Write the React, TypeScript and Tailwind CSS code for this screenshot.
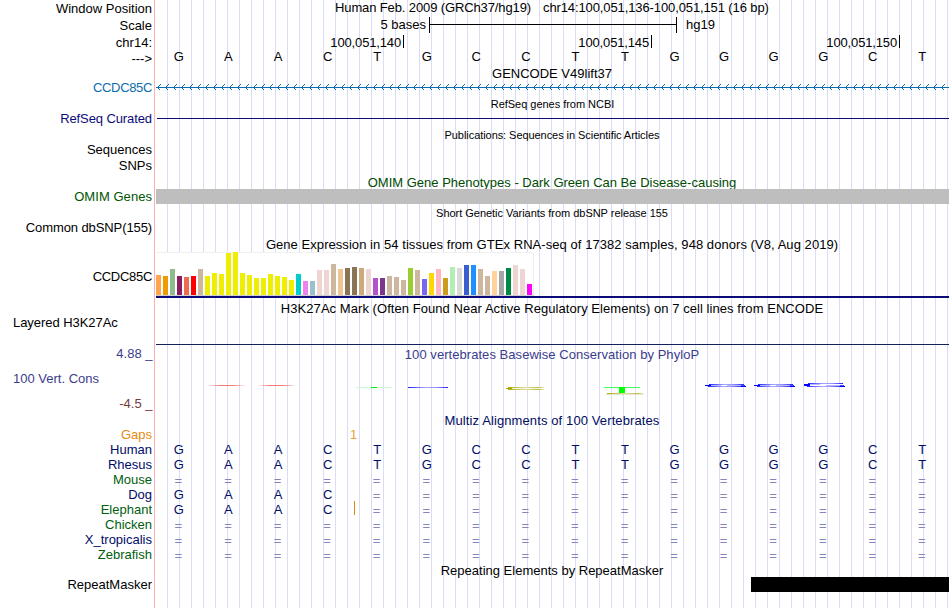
import type { ReactNode } from 'react';

const BASES = 'GAACTGCCTTGGGGCT'.split('');
const ALIGNED = [...BASES];
const GAPPED = Array(16).fill('=') as string[];
const PARTIAL = ['G', 'A', 'A', 'C', ...(Array(12).fill('=') as string[])];

// [height, colour] for each of the 54 GTEx tissues
const TISSUES: [number, string][] = [
  [20, '#ffa54f'], [19, '#ee9a00'], [26, '#8fbc8f'], [19, '#8b1c62'], [18, '#ee6a50'], [19, '#ff0000'],
  [26, '#cdb79e'], [19, '#eeee00'], [22, '#eeee00'], [21, '#eeee00'], [42, '#eeee00'], [43, '#eeee00'],
  [22, '#eeee00'], [20, '#eeee00'], [17, '#eeee00'], [17, '#eeee00'], [21, '#eeee00'], [19, '#eeee00'],
  [18, '#eeee00'], [15, '#eeee00'], [21, '#00cdcd'], [14, '#ee82ee'], [14, '#9ac0cd'], [25, '#eed5d2'],
  [25, '#eed5d2'], [31, '#cdb79e'], [26, '#eec591'], [27, '#8b7355'], [28, '#8b7355'], [27, '#cdaa7d'],
  [26, '#eed5d2'], [17, '#b452cd'], [17, '#7a378b'], [19, '#cdb79e'], [18, '#cdb79e'], [15, '#cdb79e'],
  [27, '#9acd32'], [25, '#cdb79e'], [16, '#7a67ee'], [22, '#ffd700'], [26, '#ffb6c1'], [17, '#cd9b1d'],
  [28, '#b4eeb4'], [27, '#d9d9d9'], [30, '#3a5fcd'], [30, '#1e90ff'], [26, '#cdb79e'], [19, '#cdb79e'],
  [24, '#ffd39b'], [24, '#a6a6a6'], [27, '#008b45'], [30, '#eed5d2'], [26, '#eed5d2'], [11, '#ff00ff'],
];

const SPECIES: { name: string; green?: boolean; cells: string[]; insert?: boolean }[] = [
  { name: 'Human', cells: ALIGNED },
  { name: 'Rhesus', cells: ALIGNED },
  { name: 'Mouse', green: true, cells: GAPPED },
  { name: 'Dog', cells: PARTIAL },
  { name: 'Elephant', green: true, cells: PARTIAL, insert: true },
  { name: 'Chicken', green: true, cells: GAPPED },
  { name: 'X_tropicalis', cells: GAPPED },
  { name: 'Zebrafish', green: true, cells: GAPPED },
];

function Row({ h, label, side = '', align = 'text-right', children }: { h: string; label?: ReactNode; side?: string; align?: string; children?: ReactNode }) {
  return (
    <div className={`flex shrink-0 ${h}`}>
      <div className={`w-[155px] shrink-0 pr-[3px] ${align} ${side}`}>{label}</div>
      <div className="w-[794px] shrink-0">{children}</div>
    </div>
  );
}

function Title({ h, className = '', children }: { h: string; className?: string; children: ReactNode }) {
  return (
    <Row h={h}>
      <div className={`text-center ${className}`}>{children}</div>
    </Row>
  );
}

function Letters({ cells, className = '' }: { cells: string[]; className?: string }) {
  return (
    <div className={`-ml-[0.9px] grid w-[793px] grid-cols-16 text-center ${className}`}>
      {cells.map((c, i) =>
        c === '=' ? <span key={i} className="-ml-px pt-px text-[#8686bb]">=</span> : <span key={i}>{c}</span>,
      )}
    </div>
  );
}

function StrandLine() {
  const chevrons = Array.from({ length: 99 }, (_, i) => `M${5.5 + i * 8} 0.5l-3 3l3 3`).join('');
  return (
    <svg className="mt-[4px] block h-[7px] w-[794px]" viewBox="0 0 794 7" fill="none" stroke="#0c6cb0" shapeRendering="crispEdges">
      <path d="M1 3.5H794" />
      <path d={chevrons} />
    </svg>
  );
}

function FlatG({ x, y, tall }: { x: number; y: number; tall?: boolean }) {
  const b = tall ? 3 : 2;
  return (
    <g transform={`translate(${x} ${y})`}>
      <rect x="4" y="0" width="35" height={b + 1} fill="#fff" />
      <rect x="4" y="0" width="35" height="1" fill="url(#rim)" />
      <rect x="0" y="1" width="6" height={b - 1} fill="#0000ff" />
      <rect x="6" y="1" width="10" height="1" fill="#b9b9ff" />
      <rect x="22" y={b - 1} width="14" height="1" fill="#b9b9ff" />
      <rect x="36" y={b - 1} width="4" height="1" fill="#4545ff" />
      <rect x="3" y={b} width="34" height="1" fill="url(#rim)" />
      <rect x="36" y={b} width="5" height="1" fill="#0000ff" />
    </g>
  );
}

function ConservationLogo() {
  return (
    <svg className="block h-[50px] w-[794px]" viewBox="155 362 794 50" shapeRendering="crispEdges">
      <defs>
        <linearGradient id="red">
          <stop offset="0" stopColor="#ff6060" stopOpacity="0" />
          <stop offset="0.35" stopColor="#f67c7c" />
          <stop offset="0.65" stopColor="#f67c7c" />
          <stop offset="1" stopColor="#ff6060" stopOpacity="0" />
        </linearGradient>
        <linearGradient id="rim">
          <stop offset="0" stopColor="#2020ff" />
          <stop offset="0.45" stopColor="#a8a8ff" />
          <stop offset="0.7" stopColor="#9090ff" />
          <stop offset="1" stopColor="#2020ff" />
        </linearGradient>
        <linearGradient id="olive">
          <stop offset="0" stopColor="#aaaa00" />
          <stop offset="0.5" stopColor="#e0e0a8" />
          <stop offset="0.85" stopColor="#bcbc48" />
          <stop offset="1" stopColor="#e6e6b8" />
        </linearGradient>
      </defs>
      <rect x="207" y="385" width="39" height="1" fill="url(#red)" />
      <rect x="257" y="385" width="39" height="1" fill="url(#red)" />
      <rect x="356" y="387" width="36" height="1" fill="#ccf8d4" />
      <rect x="371" y="387" width="6" height="1" fill="#00f000" />
      <rect x="408" y="387" width="40" height="1" fill="url(#rim)" />
      <rect x="508" y="387" width="36" height="1" fill="url(#olive)" />
      <rect x="506" y="388" width="6" height="1" fill="#a8a800" />
      <rect x="512" y="388" width="29" height="1" fill="#f5f5dc" />
      <rect x="508" y="389" width="36" height="1" fill="url(#olive)" />
      <rect x="604" y="387" width="36" height="1" fill="#48ff60" />
      <rect x="619" y="387" width="6" height="6" fill="#00ff00" />
      <rect x="607" y="393" width="36" height="1" fill="url(#olive)" />
      <rect x="606" y="394" width="38" height="1" fill="#d8d8a0" opacity="0.6" />
      <FlatG x={705} y={384} />
      <FlatG x={754} y={384} />
      <FlatG x={804} y={383} tall />
    </svg>
  );
}

export default function App() {
  return (
    <div className="h-[608px] w-[950px] overflow-hidden bg-white font-['Liberation_Sans',Arial,sans-serif] text-[13px] leading-[15px] whitespace-pre text-black">
      <div className="flex h-full w-[949px] flex-col bg-[linear-gradient(#ffb0b0,#ffb0b0),repeating-linear-gradient(to_right,#dcdcf7_0,#dcdcf7_1px,transparent_1px,transparent_12px)] bg-[size:1px_100%,782px_100%] bg-[position:154px_0,167px_0] bg-no-repeat">
        <Row h="h-[17px]" label="Window Position" side="pt-px">
          <div className="flex pl-[180px]">
            <span className="w-[208px] tracking-[-0.12px]">Human Feb. 2009 (GRCh37/hg19)</span>
            <span className="tracking-[-0.11px]">chr14:100,051,136-100,051,151 (16 bp)</span>
          </div>
        </Row>
        <Row h="h-[17px]" label="Scale" side="pt-px">
          <div className="flex">
            <span className="w-[271px] text-right">5 bases</span>
            <div className="ml-[3px] flex h-[16px] w-[248px] items-center border-x border-black">
              <div className="mb-px h-px w-full bg-black" />
            </div>
            <span className="ml-[9px]">hg19</span>
          </div>
        </Row>
        <Row h="h-[15px]" label="chr14:" side="pt-px">
          <div className="flex justify-between pr-[49px] pl-[176px] pt-px">
            {['100,051,140', '100,051,145', '100,051,150'].map((t) => (
              <div key={t} className="flex w-[73px] justify-end">
                <span className="tracking-[-0.15px]">{t}</span>
                <div className="ml-[2px] h-[13px] w-px shrink-0 bg-black" />
              </div>
            ))}
          </div>
        </Row>
        <Row h="h-[17px]" label="--->" side="pt-[2px]">
          <Letters cells={BASES} />
        </Row>

        <Title h="h-[14px]">GENCODE V49lift37</Title>
        <Row h="h-[16px]" label="CCDC85C" side="text-[#0c6cb0] tracking-[-0.35px]">
          <StrandLine />
        </Row>
        <Title h="h-[15px]" className="pt-px pl-px text-[11px] tracking-[-0.03px]">RefSeq genes from NCBI</Title>
        <Row h="h-[16px]" label="RefSeq Curated" side="text-[#0c0c78] tracking-[-0.1px]">
          <div className="mt-[7px] ml-[2px] h-px bg-[#0c0c78]" />
        </Row>
        <Title h="h-[15px]" className="pt-px text-[11px] tracking-[-0.06px]">Publications: Sequences in Scientific Articles</Title>
        <Row h="h-[16px]" label="Sequences" />
        <Row h="h-[16px]" label="SNPs" />
        <Title h="h-[15px]" className="pt-px text-[#004b00]">OMIM Gene Phenotypes - Dark Green Can Be Disease-causing</Title>
        <Row h="h-[15px]" label="OMIM Genes" side="text-[#005500] tracking-[0.05px]">
          <div className="ml-px h-[15px] bg-[#bebebe]" />
        </Row>
        <Title h="h-[16px]" className="pt-[2px] text-[11px] tracking-[-0.03px]">Short Genetic Variants from dbSNP release 155</Title>
        <Row h="h-[16px]" label="Common dbSNP(155)" side="tracking-[-0.1px]" />
        <Title h="h-[16px]" className="pt-px tracking-[0.055px]">Gene Expression in 54 tissues from GTEx RNA-seq of 17382 samples, 948 donors (V8, Aug 2019)</Title>
        <Row h="h-[49px]" label="CCDC85C" side="pt-[17px] tracking-[-0.3px]">
          <div className="ml-px flex h-[44px] w-[378px] items-end gap-[2px] border-t border-r border-b border-t-[#f0f0f0] border-r-[#f0f0f0] border-b-[#cfcfcf] bg-white">
            {TISSUES.map(([height, color], i) => (
              <div key={i} className="w-[5px] shrink-0" style={{ height, backgroundColor: color }} />
            ))}
          </div>
          <div className="ml-px h-[2px] bg-[#0c0c78]" />
        </Row>
        <Title h="h-[14px]" className="tracking-[0.055px]">H3K27Ac Mark (Often Found Near Active Regulatory Elements) on 7 cell lines from ENCODE</Title>
        <Row h="h-[32px]" label="Layered H3K27Ac" side="pl-[13px] tracking-[-0.05px]" align="text-left">
          <div className="mt-[29px] ml-px h-px bg-[#14205a]" />
        </Row>
        <div className="-mt-px flex h-[66px] shrink-0 text-[#3c3c8c]">
          <div className="flex w-[155px] shrink-0 flex-col gap-[10px] pr-[2.5px] pl-[13px]">
            <span className="text-right">4.88 _</span>
            <span>100 Vert. Cons</span>
            <span className="text-right text-[#783c3c]">-4.5 _</span>
          </div>
          <div className="w-[794px] shrink-0">
            <div className="h-[16px] pt-px text-center tracking-[0.05px]">100 vertebrates Basewise Conservation by PhyloP</div>
            <ConservationLogo />
          </div>
        </div>
        <Title h="h-[15px]" className="pt-[1px] tracking-[0.11px] text-[#000c60]">Multiz Alignments of 100 Vertebrates</Title>
        <Row h="h-[15px]" label="Gaps" side="text-[#e68a10]">
          <div className="pl-[195px] text-[#eba040]">1</div>
        </Row>
        {SPECIES.map((s) => (
          <Row key={s.name} h="h-[15px]" label={s.name} side={s.green ? 'text-[#006010]' : 'text-[#000c66]'}>
            <div className="relative">
              <Letters cells={s.cells} className="text-[#000c66]" />
              {s.insert && <div className="absolute -top-px left-[199px] h-[14px] w-px bg-[#e08a10]" />}
            </div>
          </Row>
        ))}
        <Title h="h-[15px]" className="pt-[1px]">Repeating Elements by RepeatMasker</Title>
        <Row h="h-[31px]" label="RepeatMasker">
          <div className="ml-[596px] h-[15px] bg-black" />
        </Row>
      </div>
    </div>
  );
}
